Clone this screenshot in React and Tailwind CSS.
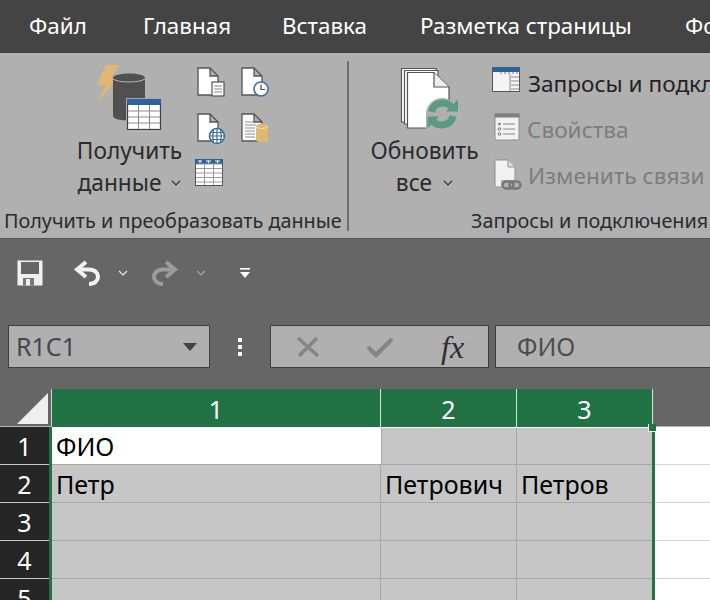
import React from "react";

const Doc = ({ x = 1, y = 1, w = 20, h = 27, f = 8 }) => (
  <path d={`M${x} ${y}H${x + w - f}L${x + w} ${y + f}V${y + h}H${x}Z M${x + w - f} ${y}V${y + f}H${x + w}`} fill="#fff" stroke="#555" strokeWidth="1.3" />
);

const DataIcon = () => (
  <svg width="70" height="68" viewBox="0 0 70 68">
    <path d="M11 1H24L16 14H23L2 39L11 21H2Z" fill="#e2b772" />
    <path d="M18 14C18 8 50 8 50 14V52C50 58 18 58 18 52Z" fill="#505050" />
    <path d="M18 15C24 19 44 19 50 15" fill="none" stroke="#b5b5b5" strokeWidth="1" />
    <rect x="31" y="34" width="36" height="34" fill="#b9b9b9" />
    <rect x="32.5" y="35.5" width="33" height="30" fill="#fff" stroke="#444" strokeWidth="1.3" />
    <rect x="32" y="35" width="34" height="6" fill="#2f6397" />
    <path d="M33 47H65M33 53H65M33 59H65M43.5 41V65M54.5 41V65" stroke="#8c8c8c" strokeWidth="1" />
  </svg>
);

const PageList = () => (
  <svg width="30" height="32" viewBox="0 0 30 32">
    <Doc />
    <rect x="15" y="15" width="12" height="14" fill="#fff" stroke="#555" strokeWidth="1.2" />
    <path d="M17 19H25M17 22H25M17 25H25" stroke="#8a8a8a" />
  </svg>
);
const PageClock = () => (
  <svg width="30" height="32" viewBox="0 0 30 32">
    <Doc />
    <circle cx="20" cy="22" r="7" fill="#fff" stroke="#3f6d9c" strokeWidth="1.6" />
    <path d="M20 17.5V22.5H24" fill="none" stroke="#444" strokeWidth="1.2" />
  </svg>
);
const PageGlobe = () => (
  <svg width="30" height="32" viewBox="0 0 30 32">
    <Doc />
    <circle cx="20" cy="23" r="7.5" fill="#fff" stroke="#3f6d9c" strokeWidth="1.6" />
    <path d="M13 23H27M14 19.5H26M14 26.5H26M20 16V30M16.5 17Q15 23 16.5 29M23.5 17Q25 23 23.5 29" fill="none" stroke="#3f6d9c" strokeWidth="1.2" />
  </svg>
);
const PageDb = () => (
  <svg width="30" height="32" viewBox="0 0 30 32">
    <Doc />
    <path d="M4 9H13M4 12H15M4 15H14M4 18H14M4 21H14M4 24H14" stroke="#8a8a8a" />
    <path d="M15 13C15 10 27 10 27 13V27C27 30 15 30 15 27Z" fill="#e0b970" />
    <path d="M15 14C18 16 24 16 27 14" fill="none" stroke="#f2e2c0" />
  </svg>
);
const TableIcon = () => (
  <svg className="-ml-[3px] -mt-[2px]" width="30" height="30" viewBox="0 0 30 30">
    <rect x="1.5" y="2.5" width="27" height="26" fill="#fff" stroke="#555" />
    <rect x="1" y="2" width="28" height="5" fill="#2f6397" />
    <path d="M2 7H28M2 11.5H28M2 16H28M2 20.5H28M2 25H28M10.5 7V28M19.5 7V28" stroke="#9a9a9a" />
    <path d="M4 4H8M6 4V6M12 4H17M14.5 4V6M21 4H26M23.5 4V6" stroke="#fff" />
  </svg>
);

const RefreshIcon = () => (
  <svg width="60" height="64" viewBox="0 0 60 64">
    <path d="M1.5 1.5H36V55H1.5Z" fill="#fff" stroke="#555" strokeWidth="1.2" />
    <path d="M4.5 3.5H38V57H4.5Z" fill="#fff" stroke="#555" strokeWidth="1.2" />
    <path d="M7.5 5.5H34L49 20V61H7.5Z" fill="#fff" stroke="#555" strokeWidth="1.2" />
    <path d="M34 5.5V20H49" fill="#eeeeee" stroke="#555" strokeWidth="1.2" />
    <path d="M26 62V47A16 16 0 0 1 58 47A16 16 0 0 1 42 64H26Z" fill="#b0b0b0" />
    <path d="M31.5 45C33.5 34.5 47 33.5 52 41" fill="none" stroke="#5a9982" strokeWidth="7" />
    <path d="M46 44.5H58V32.5Z" fill="#5a9982" />
    <path d="M53 49C51 59.5 37 60.5 32 53" fill="none" stroke="#5a9982" strokeWidth="7" />
    <path d="M27.5 49.5H39L27.5 61.5Z" fill="#5a9982" />
  </svg>
);
const QueriesIcon = () => (
  <svg className="-mt-[8px]" width="28" height="26" viewBox="0 0 28 26">
    <rect x="0.5" y="0.5" width="27" height="24" fill="#f4f4f4" stroke="#555" />
    <rect x="0" y="0" width="28" height="5" fill="#2f6397" />
    <path d="M8 6H10M12 6H14M16 6H18M20 6H22M24 6H26" stroke="#777" />
    <path d="M18 7V24M19 10H27M19 14H27M19 18H27M19 22H27" stroke="#8c8c8c" />
  </svg>
);
const PropsIcon = () => (
  <svg className="-mt-[6px]" width="26" height="28" viewBox="0 0 26 28">
    <rect x="1" y="1" width="24" height="26" fill="#f2f2f2" stroke="#8f8f8f" />
    <rect x="0.5" y="0.5" width="25" height="4" fill="#7f7f7f" />
    <path d="M9 11H21M9 16H21M9 21H21" stroke="#8a8a8a" />
    <circle cx="5.5" cy="11" r="1.3" fill="#777" />
    <circle cx="5.5" cy="16" r="1.3" fill="none" stroke="#777" />
    <circle cx="5.5" cy="21" r="1.3" fill="none" stroke="#777" />
  </svg>
);
const LinkIcon = () => (
  <svg className="-mt-[2px]" width="28" height="32" viewBox="0 0 28 32">
    <path d="M1 1H14L21 8V28H1Z" fill="#f2f2f2" stroke="#8f8f8f" />
    <path d="M14 1V8H21" fill="#e0e0e0" stroke="#8f8f8f" />
    <rect x="7" y="21" width="21" height="11" fill="#b0b0b0" />
    <rect x="8.5" y="22.5" width="11" height="7" rx="3.5" fill="none" stroke="#777" strokeWidth="2.4" />
    <rect x="15.5" y="22.5" width="11" height="7" rx="3.5" fill="none" stroke="#777" strokeWidth="2.4" />
  </svg>
);
const Chevron = ({ c = "#333" }) => (
  <svg width="10" height="6" viewBox="0 0 10 6">
    <path d="M1 1L5 5L9 1" fill="none" stroke={c} strokeWidth="1.2" />
  </svg>
);

const SaveIcon = () => (
  <svg width="26" height="26" viewBox="0 0 26 26">
    <path d="M0.5 0.5H25.5V25.5H0.5Z" fill="#f0f0f0" />
    <rect x="4" y="2" width="18" height="12" fill="#666" />
    <rect x="6" y="18" width="11" height="7.5" fill="#777" />
    <rect x="9" y="19" width="4" height="6.5" fill="#f0f0f0" />
  </svg>
);
const Undo = ({ c, flip }) => (
  <svg width="28" height="28" viewBox="0 0 28 28" className={flip ? "-scale-x-100" : ""}>
    <path d="M13 3L4 10.5L13 18" fill="none" stroke={c} strokeWidth="4" />
    <path d="M4 10.5H16C28 10.5 28 25 16 25" fill="none" stroke={c} strokeWidth="4" />
  </svg>
);

const Row = ({ n, first, cells }) => {
  const topLine = first ? "border-t border-t-white" : "";
  return (
    <div className="flex h-[38px] shrink-0 text-[25px] leading-[39px] text-black">
      <div className="w-[49px] shrink-0 bg-[#262626] border-b border-[#c8c8c8] text-white text-center">{n}</div>
      <div className="w-[3px] shrink-0 bg-[#217346]"></div>
      <div className={`w-[329px] shrink-0 border-b border-[#a9a9a9] pl-[4px] ${first ? "bg-white" : "bg-[#c6c6c6] border-r border-r-[#a9a9a9]"}`}>{cells[0]}</div>
      <div className={`w-[136px] shrink-0 border-b border-r border-[#a9a9a9] pl-[4px] bg-[#c6c6c6] ${first ? "border-l border-l-[#a9a9a9]" : ""} ${topLine}`}>{cells[1]}</div>
      <div className={`w-[135px] shrink-0 border-b border-[#a9a9a9] pl-[4px] bg-[#c6c6c6] ${topLine}`}>{cells[2]}</div>
      <div className="w-[3px] shrink-0 bg-[#217346]"></div>
      <div className="flex-1 bg-white border-b border-[#d4d4d4]"></div>
    </div>
  );
};

export default function App() {
  return (
    <div className="w-[710px] h-[600px] overflow-hidden flex flex-col bg-[#666666] whitespace-nowrap font-['Noto_Sans',sans-serif]">
      {/* Tabs */}
      <div className="h-[53px] shrink-0 bg-[#444444] flex items-center pl-[29px] pb-[2px] text-[22.4px] text-white">
        <div className="w-[114px] shrink-0">Файл</div>
        <div className="w-[139px] shrink-0">Главная</div>
        <div className="w-[138px] shrink-0">Вставка</div>
        <div className="w-[265px] shrink-0">Разметка страницы</div>
        <div className="w-[80px] shrink-0">Формулы</div>
      </div>

      {/* Ribbon */}
      <div className="h-[186px] shrink-0 bg-[#b0b0b0] border-b border-[#555555] flex">
        <div className="w-[347px] shrink-0 flex flex-col">
          <div className="h-[156px] flex">
            <div className="w-[197px] shrink-0 flex flex-col items-center text-[#2b2b2b] text-[22.7px] leading-[32px] pl-[62px] pt-[11px]">
              <DataIcon />
              <div className="mt-[3px]">Получить</div>
              <div className="flex items-center gap-[10px]">данные <Chevron /></div>
            </div>
            <div className="grid grid-cols-[44px_44px] auto-rows-[46px] pt-[14px] content-start">
              <PageList />
              <PageClock />
              <PageGlobe />
              <PageDb />
              <TableIcon />
            </div>
          </div>
          <div className="pl-[4px] text-[19.8px] leading-[24px] text-[#2b2b2b]">Получить и преобразовать данные</div>
        </div>
        <div className="w-[2px] h-[170px] mt-[8px] shrink-0 bg-[#6e6e6e]"></div>
        <div className="flex-1 flex flex-col">
          <div className="h-[156px] flex">
            <div className="w-[141px] shrink-0 flex flex-col items-center text-[#2b2b2b] text-[22.7px] leading-[32px] pt-[14px] pl-[10px]">
              <div className="pl-[10px]"><RefreshIcon /></div>
              <div className="mt-[4px]">Обновить</div>
              <div className="flex items-center gap-[11px]">все <Chevron /></div>
            </div>
            <div className="flex flex-col pt-[8px] text-[22.6px] ml-[2px]">
              <div className="h-[46px] flex items-center gap-[8px] text-[#222222]"><QueriesIcon />Запросы и подключения</div>
              <div className="h-[46px] flex items-center gap-[7px] text-[#7d7d7d] pl-[2px]"><PropsIcon />Свойства</div>
              <div className="h-[46px] flex items-center gap-[6px] text-[#7d7d7d] pl-[2px]"><LinkIcon />Изменить связи</div>
            </div>
          </div>
          <div className="pl-[122px] text-[19.8px] leading-[24px] text-[#2b2b2b]">Запросы и подключения</div>
        </div>
      </div>

      {/* Quick access */}
      <div className="h-[86px] shrink-0 flex items-center pl-[17px] pb-[18px]">
        <SaveIcon />
        <div className="ml-[30px]"><Undo c="#f2f2f2" /></div>
        <div className="ml-[17px]"><Chevron c="#e8e8e8" /></div>
        <div className="ml-[23px]"><Undo c="#9c9c9c" flip /></div>
        <div className="ml-[17px]"><Chevron c="#a5a5a5" /></div>
        <div className="ml-[33px]">
          <svg width="12" height="14" viewBox="0 0 12 14">
            <rect x="1" y="2" width="10" height="1.6" fill="#fff" />
            <path d="M1 6H11L6 12Z" fill="#fff" />
          </svg>
        </div>
      </div>

      {/* Formula bar */}
      <div className="h-[43px] shrink-0 flex">
        <div className="ml-[8px] w-[202px] bg-[#b0b0b0] border border-[#3f3f3f] flex items-center justify-between pl-[7px] pr-[11px] text-[25px] text-[#45474d]">
          R1C1
          <svg width="16" height="10" viewBox="0 0 16 10"><path d="M1 1H15L8 9Z" fill="#444" /></svg>
        </div>
        <div className="w-[60px] flex flex-col items-center justify-center gap-[3px]">
          <span className="w-[4px] h-[4px] bg-white"></span>
          <span className="w-[4px] h-[4px] bg-white"></span>
          <span className="w-[4px] h-[4px] bg-white"></span>
        </div>
        <div className="w-[219px] bg-[#b0b0b0] border border-[#3f3f3f] flex items-center">
          <svg className="ml-[25px]" width="24" height="22" viewBox="0 0 24 22"><path d="M2 2L22 20M21 2L3 20" stroke="#858585" strokeWidth="3.6" /></svg>
          <svg className="ml-[46px]" width="28" height="22" viewBox="0 0 28 22"><path d="M2 11L10 19L26 3" fill="none" stroke="#858585" strokeWidth="4.4" /></svg>
          <span className="ml-[47px] font-['Liberation_Serif',serif] italic text-[32px] leading-[32px] text-[#2e2e2e]">fx</span>
        </div>
        <div className="ml-[6px] flex-1 bg-[#b0b0b0] border border-r-0 border-[#3f3f3f] flex items-center pl-[21px] text-[25px] text-[#4d4d4f]">ФИО</div>
      </div>

      <div className="h-[21px] shrink-0"></div>

      {/* Column header */}
      <div className="h-[38px] shrink-0 flex text-white text-[25px]">
        <div className="w-[52px] shrink-0">
          <div className="w-[52px] h-[38px] border-r border-[#d0d0d0] border-b border-b-[#b5b5b5] flex items-end justify-end pr-[3px] pb-[2px]">
            <svg width="31" height="31" viewBox="0 0 31 31"><path d="M31 0V31H0Z" fill="#efefef" /></svg>
          </div>
        </div>
        <div className="w-[329px] shrink-0 bg-[#217346] border-r border-[#d8e4dc] text-center leading-[40px]">1</div>
        <div className="w-[136px] shrink-0 bg-[#217346] border-r border-[#d8e4dc] text-center leading-[40px]">2</div>
        <div className="w-[136px] shrink-0 bg-[#217346] border-r border-[#d8e4dc] text-center leading-[40px]">3</div>
        <div className="flex-1 border-b border-[#b5b5b5]"></div>
      </div>

      {/* Sheet */}
      <div className="relative flex-1 flex flex-col">
        <Row n="1" first cells={["ФИО", "", ""]} />
        <Row n="2" cells={["Петр", "Петрович", "Петров"]} />
        <Row n="3" cells={["", "", ""]} />
        <Row n="4" cells={["", "", ""]} />
        <Row n="5" cells={["", "", ""]} />
        <div className="absolute left-[648px] top-[-3px] w-[8px] h-[8px] bg-[#217346] border-l border-b border-white"></div>
      </div>
    </div>
  );
}
